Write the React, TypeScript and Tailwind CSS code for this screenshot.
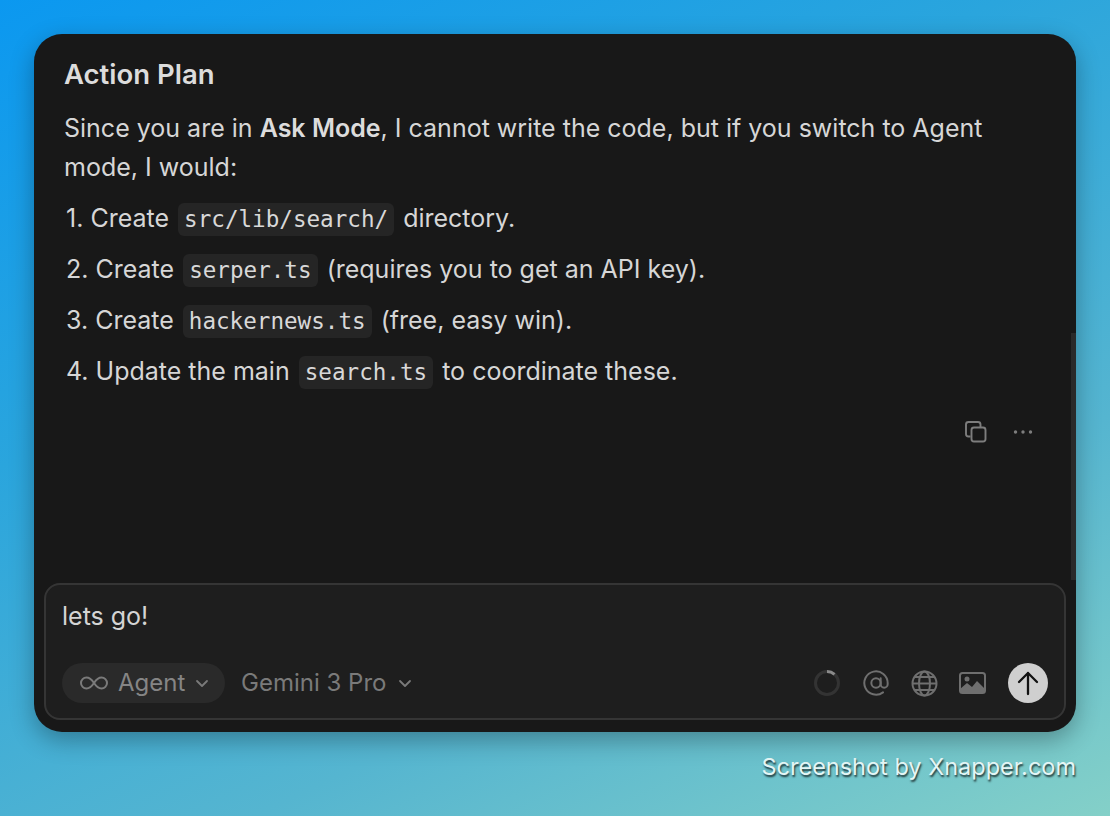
import React from "react";

const Code = ({ children }: { children: React.ReactNode }) => (
  <code className="mx-[2px] inline-block rounded-[6px] bg-[#252525] px-[6px] font-['DejaVu_Sans_Mono',monospace] text-[22.6px] leading-[33px] text-[#d8d8d8]">
    {children}
  </code>
);

const Item = ({ n, children }: { n: number; children: React.ReactNode }) => (
  <div className="flex h-[51px] items-center whitespace-pre pl-[2px]">
    <span>{n}. </span>
    <span>{children}</span>
  </div>
);

export default function App() {
  return (
    <div className="flex h-[816px] w-[1110px] flex-col overflow-hidden bg-[linear-gradient(155deg,#0b98f0_0%,#2aa5dd_35%,#55b5d0_70%,#84d0c8_100%)] px-[34px] pt-[34px] font-['Inter',sans-serif]">
      <div className="relative flex h-[698px] w-[1042px] flex-col rounded-[28px] bg-[#181818] shadow-[0_8px_24px_rgba(0,0,0,0.3)]">
        <div className="absolute right-0 top-[299px] h-[247px] w-[5px] bg-[#2a2a2a]" />
        <div className="flex-1 pl-[30px] pr-[40px] pt-[21px] text-[25px] text-[#d6d6d6]">
          <h2 className="h-[38px] text-[27.5px] font-semibold leading-[38px] text-[#dcdcdc]">Action Plan</h2>
          <p className="mt-[16px] text-[25px] leading-[39px]">
            Since you are in <b className="font-semibold text-[#dcdcdc]">Ask Mode</b>, I cannot write the code, but if you switch to Agent mode, I would:
          </p>
          <div className="mt-[6px]">
            <Item n={1}>Create <Code>src/lib/search/</Code> directory.</Item>
            <Item n={2}>Create <Code>serper.ts</Code> (requires you to get an API key).</Item>
            <Item n={3}>Create <Code>hackernews.ts</Code> (free, easy win).</Item>
            <Item n={4}>Update the main <Code>search.ts</Code> to coordinate these.</Item>
          </div>
          <div className="mt-[23px] flex items-center justify-end gap-[25px] pr-[3px] text-[#7d7d7d]">
            <svg width="24" height="24" viewBox="0 0 24 24" fill="none" stroke="currentColor" strokeWidth="1.9">
              <rect x="7.5" y="7.5" width="14" height="14" rx="2.5" />
              <path d="M6.5 16.5H4.5A2.5 2.5 0 0 1 2 14V4.5A2.5 2.5 0 0 1 4.5 2H14a2.500 2.500 0 0 1 2.500 2.500V7.500" />
            </svg>
            <svg width="20" height="6" viewBox="0 0 20 6" fill="currentColor">
              <circle cx="2.500" cy="3" r="1.700" />
              <circle cx="10" cy="3" r="1.700" />
              <circle cx="17.500" cy="3" r="1.700" />
            </svg>
          </div>
        </div>
        <div className="mx-[10px] mb-[12px] flex h-[137px] flex-col justify-between rounded-[16px] border-2 border-[#353535] bg-[#1e1e1e] px-[16px] pb-[15px] pt-[14px]">
          <div className="text-[25px] leading-[34px] text-[#d4d4d4]">lets go!</div>
          <div className="flex items-center">
            <div className="flex h-[40px] w-[163px] items-center rounded-full bg-[#2a2a2a] pl-[17px] text-[#7a7a7a]">
              <svg width="30" height="16" viewBox="0 0 30 16" fill="none" stroke="currentColor" strokeWidth="2">
                <path d="M15 8C12 3.500 9.800 2.500 7.500 2.500A5.500 5.500 0 0 0 7.500 13.500C9.800 13.500 12 12.500 15 8C18 3.500 20.200 2.500 22.500 2.500A5.500 5.500 0 0 1 22.500 13.500C20.200 13.500 18 12.500 15 8Z" />
              </svg>
              <span className="ml-[9px] text-[24px] text-[#858585]">Agent</span>
              <svg className="ml-[10px]" width="14" height="9" viewBox="0 0 14 9" fill="none" stroke="currentColor" strokeWidth="1.800" strokeLinecap="round" strokeLinejoin="round">
                <path d="M2 2l5 5 5-5" />
              </svg>
            </div>
            <div className="ml-[16px] flex items-center text-[#7a7a7a]">
              <span className="text-[24px]">Gemini 3 Pro</span>
              <svg className="ml-[12px]" width="14" height="9" viewBox="0 0 14 9" fill="none" stroke="currentColor" strokeWidth="1.800" strokeLinecap="round" strokeLinejoin="round">
                <path d="M2 2l5 5 5-5" />
              </svg>
            </div>
            <div className="ml-auto flex items-center text-[#6f6f6f]">
              <svg width="28" height="28" viewBox="0 0 28 28" fill="none" strokeWidth="3">
                <circle cx="14" cy="14" r="11.500" stroke="#333333" />
                <path d="M14 2.500A11.500 11.500 0 0 1 21.500 5.300" stroke="#8a8a8a" />
              </svg>
              <svg className="ml-[21px]" width="28" height="28" viewBox="0 0 24 24" fill="none" stroke="currentColor" strokeWidth="1.700" strokeLinecap="round">
                <circle cx="12" cy="12" r="4" />
                <path d="M16 8v5a3 3 0 0 0 6 0v-1a10 10 0 1 0-4 8" />
              </svg>
              <svg className="ml-[21px]" width="27" height="27" viewBox="0 0 27 27" fill="none" stroke="currentColor" strokeWidth="2">
                <circle cx="13.500" cy="13.500" r="12" />
                <ellipse cx="13.500" cy="13.500" rx="5.500" ry="12" />
                <path d="M1.500 13.500h24M3.500 7h20M3.500 20h20" />
              </svg>
              <svg className="ml-[21px]" width="27" height="22" viewBox="0 0 27 22" fill="none">
                <rect x="1" y="1" width="25" height="20" rx="2.500" stroke="currentColor" strokeWidth="2" />
                <path d="M1 21v-4l7-6 5 4 5-6 8 8v4z" fill="currentColor" />
                <circle cx="8" cy="7" r="2.500" fill="currentColor" />
              </svg>
              <div className="ml-[22px] flex h-[40px] w-[40px] items-center justify-center rounded-full bg-[#cfcfcf]">
                <svg width="24" height="26" viewBox="0 0 24 26" fill="none" stroke="#111111" strokeWidth="2.300" strokeLinecap="round" strokeLinejoin="round">
                  <path d="M12 24V3M3 12l9-9 9 9" />
                </svg>
              </div>
            </div>
          </div>
        </div>
      </div>
      <div className="mt-[20px] self-end text-[23.500px] leading-[30px] text-[#e4f6f6] [text-shadow:1px_2px_2px_rgba(0,0,0,0.75)]">
        Screenshot by Xnapper.com
      </div>
    </div>
  );
}
